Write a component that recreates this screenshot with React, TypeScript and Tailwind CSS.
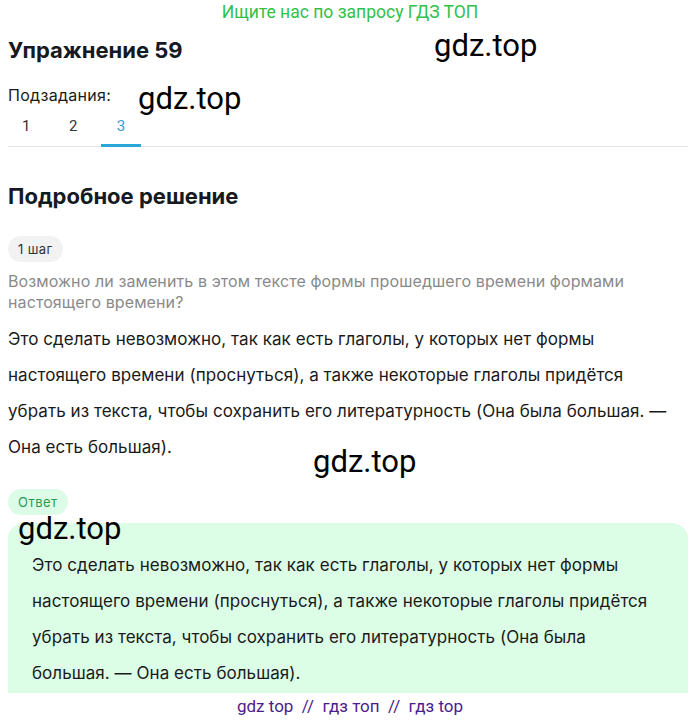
import React from "react";

const W = () => (
  <span className="absolute text-[31px] leading-none text-black whitespace-nowrap" style={{ fontFamily: "Roboto, sans-serif" }}>gdz.top</span>
);

const TEXT =
  "Это сделать невозможно, так как есть глаголы, у которых нет формы настоящего времени (проснуться), а также некоторые глаголы придётся убрать из текста, чтобы сохранить его литературность (Она была большая.\u00a0— Она есть большая).";

export default function App() {
  const font = { fontFamily: "Inter, 'Noto Sans', sans-serif" };
  return (
    <div className="w-[700px] h-[721px] bg-white relative overflow-hidden text-[#1a1a1a]" style={font}>
      <div className="text-center text-[17.5px] leading-[24px] text-[#2fc14a] pt-0" style={{ fontFamily: "Roboto, sans-serif" }}>
        Ищите нас по запросу ГДЗ ТОП
      </div>
      <div className="px-2">
        <h1 className="text-[22px] font-bold leading-[30px] mt-[11px] text-[#141a1f]">Упражнение 59</h1>
        <div className="text-[16px] leading-[22px] mt-[19px] tracking-[0.3px]">Подзадания:</div>
        <div className="flex border-b border-[#e6e6e6] mt-[2px] w-[680px]">
          <div className="w-[46px] pl-[14px] text-[15px] leading-[36px] text-[#333]" style={{ fontFamily: "Roboto, sans-serif" }}>1</div>
          <div className="w-[47px] pl-[15px] text-[15px] leading-[36px] text-[#333]" style={{ fontFamily: "Roboto, sans-serif" }}>2</div>
          <div className="w-[40px] text-center text-[15px] leading-[36px] text-[#3d9bd1] border-b-[3px] border-[#2aa7d8] -mb-px" style={{ fontFamily: "Roboto, sans-serif" }}>3</div>
        </div>
        <h2 className="text-[22px] font-bold leading-[30px] mt-[34px] text-[#141a1f]">Подробное решение</h2>
        <div className="mt-[25px] inline-block bg-[#f2f2f2] rounded-full px-[10px] text-[13px] leading-[26px] text-[#333] tracking-[0.4px]">1 шаг</div>
        <p className="mt-[9px] text-[16px] leading-[21px] text-[#8a8a8a] w-[660px] tracking-[0.1px]">
          Возможно ли заменить в этом тексте формы прошедшего времени формами настоящего времени?
        </p>
        <p className="mt-[8px] text-[17px] leading-[36px] text-[#1a1a1a] w-[668px] tracking-[0.05px]">{TEXT}</p>
        <div className="mt-[24px] inline-block bg-[#dcfce7] rounded-full px-[10px] text-[13px] leading-[26px] text-[#1f9d55] tracking-[0.5px]">Ответ</div>
        <div className="mt-[8px] bg-[#dcfde6] rounded-t-[16px] w-[680px] h-[170px] px-6 pt-[24px]">
          <p className="text-[17px] leading-[36px] text-[#1a1a1a] w-[645px] tracking-[0.05px]">{TEXT}</p>
        </div>
      </div>
      <div className="text-center text-[17px] leading-[24px] text-[#4b1c8c] mt-[1px]" style={{ fontFamily: "Roboto, sans-serif" }}>
        gdz top&nbsp; //&nbsp; гдз топ&nbsp; //&nbsp; гдз top
      </div>
      <div className="absolute left-[434px] top-[30px]"><W /></div>
      <div className="absolute left-[138px] top-[83px]"><W /></div>
      <div className="absolute left-[313px] top-[446px]"><W /></div>
      <div className="absolute left-[18px] top-[513px]"><W /></div>
    </div>
  );
}
